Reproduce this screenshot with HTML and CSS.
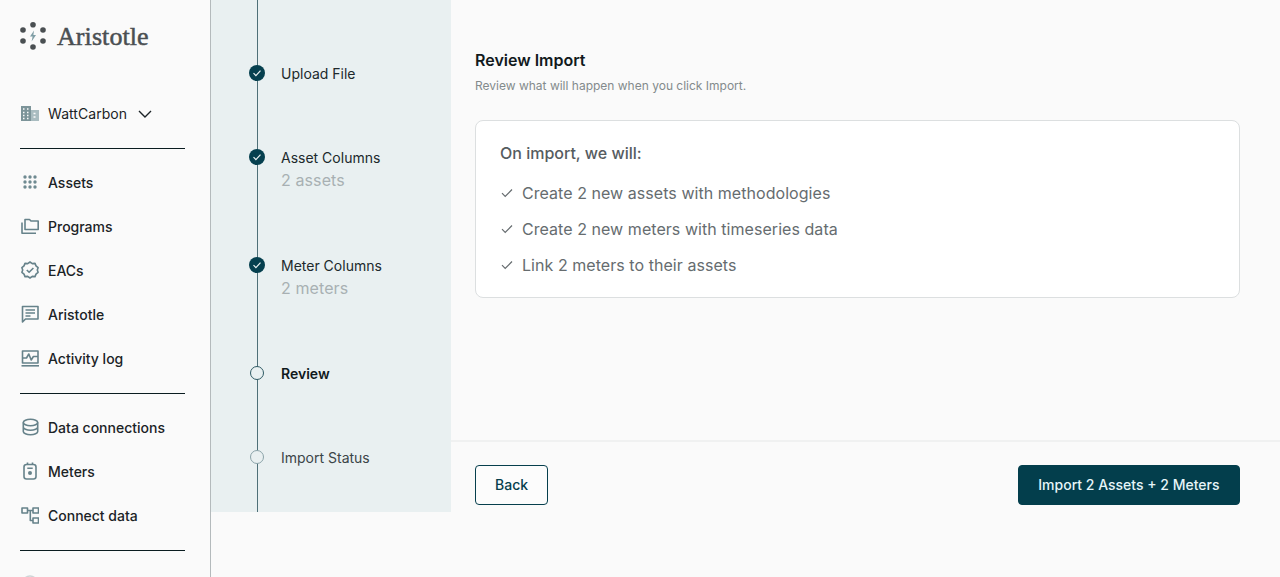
FILE: index.html
```html
<!DOCTYPE html>
<html lang="en">
<head>
<meta charset="utf-8">
<title>Review Import</title>
<link rel="stylesheet" href="styles.css">
</head>
<body>
<div class="app">
  <aside class="sidebar">
    <div class="brand">
      <svg class="brand-mark" viewBox="0 0 26 28" width="26" height="28">
        <circle cx="13" cy="2.800" r="2.800"/><circle cx="3" cy="8" r="2.800"/><circle cx="23" cy="8" r="2.800"/>
        <circle cx="3" cy="19" r="2.800"/><circle cx="23" cy="19" r="2.800"/><circle cx="13" cy="25" r="2.800"/>
        <path class="bolt" d="M14 8.500 10 14.500h2.600L11.600 19.500 16 13h-2.600z"/>
      </svg>
      <span class="brand-name">Aristotle</span>
    </div>
    <div class="org">
      <svg class="icon" viewBox="0 0 18 18"><path class="fill" d="M0 1h10v15H0z"/><path class="fill soft" d="M10 5h8v11h-8z"/><path class="cut" d="M2 4h1.500M6 4h1.500M2 7.500h1.500M6 7.500h1.500M2 10.500h1.500M6 10.500h1.500M2 13.500h1.500M6 13.500h1.500M12.500 8.500h2M12.500 12h2"/></svg>
      <span>WattCarbon</span>
      <svg class="chev" viewBox="0 0 14 8" width="14" height="8"><path d="M1 1l6 6 6-6"/></svg>
    </div>
    <nav class="nav">
      <a class="item"><svg class="icon" viewBox="0 0 18 18"><g class="dots"><circle cx="4" cy="4" r="1.700"/><circle cx="9" cy="4" r="1.700"/><circle cx="14" cy="4" r="1.700"/><circle cx="4" cy="9" r="1.700"/><circle cx="9" cy="9" r="1.700"/><circle cx="14" cy="9" r="1.700"/><circle cx="4" cy="14" r="1.700"/><circle cx="9" cy="14" r="1.700"/><circle cx="14" cy="14" r="1.700"/></g></svg>Assets</a>
      <a class="item"><svg class="icon" viewBox="0 0 18 18"><path d="M4 12.500V2.500h4.500l1.500 1.500h7.200v8.500z"/><path d="M1 5.500v10.700h14"/></svg>Programs</a>
      <a class="item"><svg class="icon" viewBox="0 0 18 18"><path d="M9 1l2.300 1.600 2.700-.2 1 2.500 2.100 1.800-.8 2.300.8 2.300-2.100 1.800-1 2.500-2.700-.2L9 17l-2.300-1.600-2.700.2-1-2.500L.9 11.300 1.700 9 .9 6.700 3 4.900l1-2.500 2.700.2z"/><path d="M5.800 9l2.300 2.300L12.400 7"/></svg>EACs</a>
      <a class="item"><svg class="icon" viewBox="0 0 18 18"><path d="M1.500 1.500h15.500v12.500H4.500l-3 3z"/><path d="M4.500 5h9.500M4.500 8h9.500M4.500 11h5"/></svg>Aristotle</a>
      <a class="item"><svg class="icon" viewBox="0 0 18 18"><path d="M1.500 2h15.500v12H1.500z"/><path d="M1.500 9h4l2.300-4 2.400 6 2.200-3.500H17"/><path d="M.5 16.800h17.500"/></svg>Activity log</a>
    </nav>
    <nav class="nav">
      <a class="item"><svg class="icon" viewBox="0 0 18 18"><ellipse cx="9.500" cy="4.500" rx="7.200" ry="3.200"/><path d="M2.300 4.500v9c0 1.800 3.200 3.200 7.200 3.200s7.200-1.400 7.200-3.200v-9M2.300 9c0 1.800 3.200 3.200 7.200 3.200s7.200-1.400 7.200-3.200"/></svg>Data connections</a>
      <a class="item"><svg class="icon" viewBox="0 0 18 18"><rect x="3" y="2.500" width="12" height="14.500" rx="2.500"/><path d="M6.500 .5v2M11.500 .5v2M6.300 6.300h5.400"/><circle class="solid" cx="9" cy="11" r="2"/></svg>Meters</a>
      <a class="item"><svg class="icon" viewBox="0 0 18 18"><path d="M1 2h5.500v5H1zM12 2h5.500v5H12zM12 12h5.500v5H12zM6.500 4.500H12M9.300 4.500v10H12"/></svg>Connect data</a>
    </nav>
    <nav class="nav">
      <a class="item item-clipped"><svg class="icon" viewBox="0 0 18 18"><circle cx="9" cy="8" r="7"/></svg></a>
    </nav>
  </aside>
  <div class="workspace">
    <ol class="stepper">
      <li class="step done"><span class="mark"><svg viewBox="0 0 16 16" width="16" height="16"><path d="M4.500 8.200l2.400 2.400 4.600-5"/></svg></span><div class="step-text"><span class="step-label">Upload File</span></div></li>
      <li class="step done"><span class="mark"><svg viewBox="0 0 16 16" width="16" height="16"><path d="M4.500 8.200l2.400 2.400 4.600-5"/></svg></span><div class="step-text"><span class="step-label">Asset Columns</span><span class="step-sub">2 assets</span></div></li>
      <li class="step done"><span class="mark"><svg viewBox="0 0 16 16" width="16" height="16"><path d="M4.500 8.200l2.400 2.400 4.600-5"/></svg></span><div class="step-text"><span class="step-label">Meter Columns</span><span class="step-sub">2 meters</span></div></li>
      <li class="step current"><span class="mark"></span><div class="step-text"><span class="step-label">Review</span></div></li>
      <li class="step pending"><span class="mark"></span><div class="step-text"><span class="step-label">Import Status</span></div></li>
    </ol>
    <main class="panel">
      <section class="content">
        <h1 class="title">Review Import</h1>
        <p class="subtitle">Review what will happen when you click Import.</p>
        <div class="card">
          <h2 class="card-title">On import, we will:</h2>
          <ul class="checks">
            <li><svg viewBox="0 0 12 10" width="12" height="10"><path d="M1 5.200l3.200 3.300L11 1.500"/></svg>Create 2 new assets with methodologies</li>
            <li><svg viewBox="0 0 12 10" width="12" height="10"><path d="M1 5.200l3.200 3.300L11 1.500"/></svg>Create 2 new meters with timeseries data</li>
            <li><svg viewBox="0 0 12 10" width="12" height="10"><path d="M1 5.200l3.200 3.300L11 1.500"/></svg>Link 2 meters to their assets</li>
          </ul>
        </div>
      </section>
      <footer class="actions">
        <button class="btn btn-outline">Back</button>
        <button class="btn btn-primary">Import 2 Assets + 2 Meters</button>
      </footer>
    </main>
  </div>
</div>
</body>
</html>
```

FILE: styles.css
```css
* { box-sizing: border-box; }
html, body { margin: 0; height: 577px; overflow: hidden; }
body { font-family: Inter, "Liberation Sans", sans-serif; background: #fafafa; color: #1b2326; }
.app { display: flex; height: 577px; overflow: hidden; }

.sidebar { width: 211px; flex: none; padding: 0 25px 0 20px; border-right: 1px solid #b4babc; background: #fafafa; overflow: hidden; }
.brand { display: flex; align-items: center; gap: 11px; height: 28px; margin-top: 22px; }
.brand-mark { fill: #4a4f52; flex: none; }
.brand-mark .bolt { fill: #7f9ea6; }
.brand-name { font-family: "Liberation Serif", serif; font-size: 26px; line-height: 30px; padding-top: 1px; color: #4a4f52; letter-spacing: 0.08px; -webkit-text-stroke: 0.5px #4a4f52; }
.org { display: flex; align-items: center; height: 24px; margin-top: 52px; padding-bottom: 1px; font-size: 14px; letter-spacing: 0.05px; }
.org .icon { margin-right: 9px; }
.org .fill { fill: #7c9499; stroke: none; }
.org .soft { fill: #a9bcc0; }
.org .cut { stroke: #fafafa; stroke-width: 1.300; fill: none; }
.chev { margin-left: 11px; margin-top: 1px; fill: none; stroke: #1b2326; stroke-width: 1.400; }
.nav { border-top: 1px solid #0a1c20; margin-top: 13px; padding-top: 11px; display: flex; flex-direction: column; }
.org + .nav { margin-top: 22px; }
.item { display: flex; align-items: center; height: 44px; font-size: 14px; font-weight: 450; gap: 9px; color: #1b2326; }
.icon { width: 18px; height: 18px; flex: none; margin-left: 1px; fill: none; stroke: #66828a; stroke-width: 1.600; stroke-linejoin: round; }
.icon .dots { fill: #6f8a91; stroke: none; }
.icon .solid { fill: #66828a; stroke: none; }
.item-clipped .icon { stroke: #cfd5d7; }

.workspace { flex: 1; display: flex; height: 512px; min-width: 0; }
.stepper { position: relative; width: 240px; flex: none; margin: 0; padding: 61px 0 0 38px; list-style: none; background: #e9f0f1; display: flex; flex-direction: column; gap: 60px; }
.stepper::before { content: ""; position: absolute; left: 46px; top: 0; bottom: 0; width: 1px; background: #4f7078; }
.step { position: relative; display: flex; }
.mark { position: relative; width: 16px; height: 24px; flex: none; display: flex; align-items: center; justify-content: center; }
.done .mark svg { background: #06404f; border-radius: 50%; fill: none; stroke: #e9f0f1; stroke-width: 1.200; display: block; }
.current .mark::before, .pending .mark::before { content: ""; width: 12px; height: 12px; border-radius: 50%; background: #e9f0f1; border: 1px solid #2f5a64; }
.pending .mark::before { border-color: #8ba3a9; }
.step-text { margin-left: 16px; display: flex; flex-direction: column; padding-top: 2px; }
.step-label { font-size: 14px; line-height: 22px; color: #20292c; }
.step-sub { font-size: 16px; line-height: 22px; padding-bottom: 2px; color: #a8b0b3; letter-spacing: 0.1px; }
.current .step-label { font-weight: 600; color: #10191c; }
.pending .step-label { color: #3b4548; }

.panel { flex: 1; min-width: 0; display: flex; flex-direction: column; }
.content { height: 440px; padding: 48px 40px 0 24px; }
.title { margin: 0; font-size: 16px; line-height: 24px; font-weight: 600; color: #11191c; }
.subtitle { margin: 4px 0 0; font-size: 12px; line-height: 20px; color: #838a8c; }
.card { margin-top: 24px; height: 178px; background: #fff; border: 1px solid #dcdfe0; border-radius: 8px; padding: 20px 24px; }
.card-title { margin: 0; font-size: 16px; line-height: 24px; font-weight: 500; color: #565c5f; }
.checks { margin: 16px 0 0; padding: 0; list-style: none; display: flex; flex-direction: column; gap: 12px; }
.checks li { display: flex; align-items: center; gap: 9px; font-size: 16px; line-height: 24px; letter-spacing: 0.05px; color: #666c6f; }
.checks svg { fill: none; stroke: #666c6f; stroke-width: 1.200; margin-left: 1px; flex: none; }

.actions { height: 72px; border-top: 2px solid #f0f1f1; padding: 23px 40px 0 24px; display: flex; justify-content: space-between; align-items: flex-start; }
.btn { height: 40px; border-radius: 4px; font-family: inherit; font-size: 14px; font-weight: 500; padding: 0 19px 2px; }
.btn-outline { background: #fcfcfc; border: 1px solid #063f4d; color: #063f4d; }
.btn-primary { background: #033e4c; border: 1px solid #033e4c; color: #e6f5f8; padding: 0 19.500px 2px; }
```
